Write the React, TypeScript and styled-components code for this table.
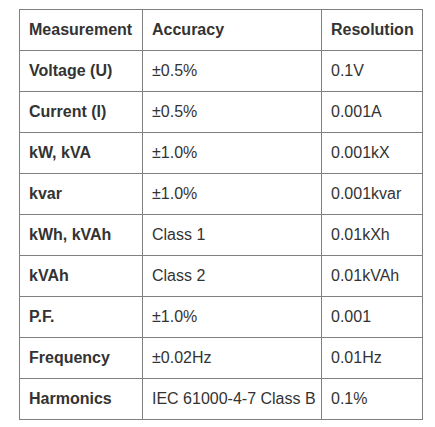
import React from 'react';
import styled, { createGlobalStyle } from 'styled-components';

interface IMeasurementRow {
  measurement: string;
  accuracy: string;
  resolution: string;
}

const rows: IMeasurementRow[] = [
  { measurement: 'Voltage (U)', accuracy: '±0.5%', resolution: '0.1V' },
  { measurement: 'Current (I)', accuracy: '±0.5%', resolution: '0.001A' },
  { measurement: 'kW, kVA', accuracy: '±1.0%', resolution: '0.001kX' },
  { measurement: 'kvar', accuracy: '±1.0%', resolution: '0.001kvar' },
  { measurement: 'kWh, kVAh', accuracy: 'Class 1', resolution: '0.01kXh' },
  { measurement: 'kVAh', accuracy: 'Class 2', resolution: '0.01kVAh' },
  { measurement: 'P.F.', accuracy: '±1.0%', resolution: '0.001' },
  { measurement: 'Frequency', accuracy: '±0.02Hz', resolution: '0.01Hz' },
  { measurement: 'Harmonics', accuracy: 'IEC 61000-4-7 Class B', resolution: '0.1%' },
];

const GlobalStyle = createGlobalStyle`
  body {
    margin: 0;
    background: #ffffff;
  }
`;

const Page = styled.div`
  padding: 9px 0 0 19px;
`;

const Table = styled.table`
  border-collapse: collapse;
  table-layout: fixed;
  width: 403px;
  font-family: "Liberation Sans", Arial, sans-serif;
  font-size: 16px;
  color: #333333;
`;

const Column = styled.col<{ $width: number }>`
  width: ${(p) => p.$width}px;
`;

const Row = styled.tr`
  height: 41px;
`;

const Cell = styled.td<{ $bold?: boolean }>`
  border: 1px solid #808080;
  padding: 0 9px;
  vertical-align: middle;
  font-weight: ${(p) => (p.$bold ? 700 : 400)};
  white-space: nowrap;
  overflow: hidden;
`;

const App: React.FC = () => (
  <Page>
    <GlobalStyle />
    <Table>
      <colgroup>
        <Column $width={123} />
        <Column $width={179} />
        <Column $width={101} />
      </colgroup>
      <tbody>
        <Row>
          <Cell $bold>Measurement</Cell>
          <Cell $bold>Accuracy</Cell>
          <Cell $bold>Resolution</Cell>
        </Row>
        {rows.map(({ measurement, accuracy, resolution }) => (
          <Row key={measurement + accuracy}>
            <Cell $bold>{measurement}</Cell>
            <Cell>{accuracy}</Cell>
            <Cell>{resolution}</Cell>
          </Row>
        ))}
      </tbody>
    </Table>
  </Page>
);

export default App;
